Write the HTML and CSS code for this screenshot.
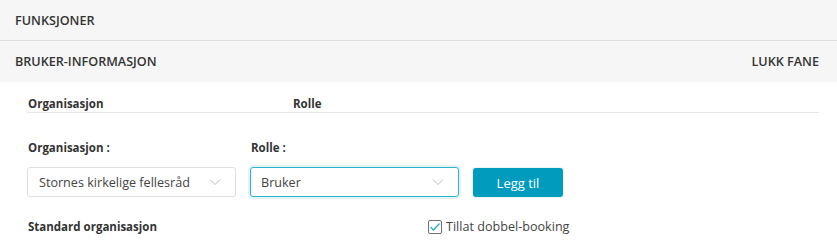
FILE: index.html
```html
<!DOCTYPE html>
<html lang="no">
<head>
<meta charset="utf-8">
<link rel="stylesheet" href="styles.css">
</head>
<body>
<div class="bar bar-top"><span class="bar-title">FUNKSJONER</span></div>
<div class="bar bar-second"><span class="bar-title">BRUKER-INFORMASJON</span><span class="bar-title">LUKK FANE</span></div>
<div class="content">
  <div class="table-head">
    <div class="th th-org">Organisasjon</div>
    <div class="th">Rolle</div>
  </div>
  <div class="form-row">
    <div class="field field-org">
      <div class="label">Organisasjon<span class="colon">:</span></div>
      <div class="select">
        <span class="select-text">Stornes kirkelige fellesråd</span>
        <svg class="chev" width="12" height="8" viewBox="0 0 12 8"><path d="M1 1.5 L6 6.5 L11 1.5" fill="none" stroke="#bcbcbc" stroke-width="1"/></svg>
      </div>
    </div>
    <div class="field field-role">
      <div class="label">Rolle<span class="colon">:</span></div>
      <div class="select select-focus">
        <span class="select-text">Bruker</span>
        <svg class="chev" width="12" height="8" viewBox="0 0 12 8"><path d="M1 1.5 L6 6.5 L11 1.5" fill="none" stroke="#bcbcbc" stroke-width="1"/></svg>
      </div>
    </div>
    <button class="btn">Legg til</button>
  </div>
  <div class="bottom-row">
    <div class="std">Standard organisasjon</div>
    <label class="check">
      <span class="box"><svg width="12" height="10" viewBox="0 0 12 10"><path d="M1.5 5 L4.5 8 L10.5 1.5" fill="none" stroke="#2aa9cc" stroke-width="1.3"/></svg></span>
      <span>Tillat dobbel-booking</span>
    </label>
  </div>
</div>
</body>
</html>
```

FILE: styles.css
```css
* { box-sizing: border-box; }
html, body { margin: 0; padding: 0; background: #fff; }
body {
  font-family: "Open Sans", "Noto Sans", sans-serif;
  color: #3a3a3a;
  font-size: 12.6px;
  width: 837px;
}
.bar {
  background: #f6f6f6;
  display: flex;
  justify-content: space-between;
  align-items: center;
  padding: 0 18px 0 15px;
}
.bar-top { height: 41px; border-bottom: 1px solid #dcdcdc; }
.bar-second { height: 41px; }
.bar-title { font-size: 12.6px; font-weight: 600; color: #333; }
.content { padding: 12px 18px 0 27px; }
.table-head {
  display: flex;
  border-bottom: 1px solid #e6e6e6;
  height: 19px;
  align-items: center;
  padding-left: 1px;
}
.th { font-weight: 700; font-size: 11.5px; color: #333; }
.th-org { width: 265px; }
.form-row { display: flex; align-items: flex-end; margin-top: 27px; }
.field { display: flex; flex-direction: column; }
.field-org { width: 223px; }
.field-role { width: 223px; }
.label { font-weight: 700; font-size: 11.5px; color: #333; padding-left: 1px; height: 20px; }
.colon { margin-left: 3px; }
.select {
  width: 209px;
  height: 30px;
  border: 1px solid #dedede;
  border-radius: 3px;
  display: flex;
  align-items: center;
  justify-content: space-between;
  padding: 0 14px 0 11px;
  margin-top: 7px;
  font-size: 12.6px;
  color: #444;
}
.select-focus {
  border-color: #2fb3cd;
  box-shadow: 0 0 0 2px #e3f4f8;
  padding-left: 10px;
}
.chev { display: block; }
.btn {
  width: 90px;
  height: 29px;
  background: #009bbd;
  border: none;
  border-radius: 3px;
  color: #fff;
  font-family: inherit;
  font-size: 13px;
  padding: 0;
  box-shadow: 0 0 0 1px #e8f5f8;
}
.bottom-row { display: flex; align-items: center; margin-top: 21px; }
.std { width: 401px; font-weight: 700; font-size: 11.5px; color: #333; padding-left: 1px; }
.check { display: flex; align-items: center; font-size: 12.6px; color: #444; }
.box {
  width: 14px; height: 14px;
  border: 1px solid #707070;
  border-radius: 2px;
  display: flex; align-items: center; justify-content: center;
  margin-right: 4px;
}
.box svg { display: block; }
```
